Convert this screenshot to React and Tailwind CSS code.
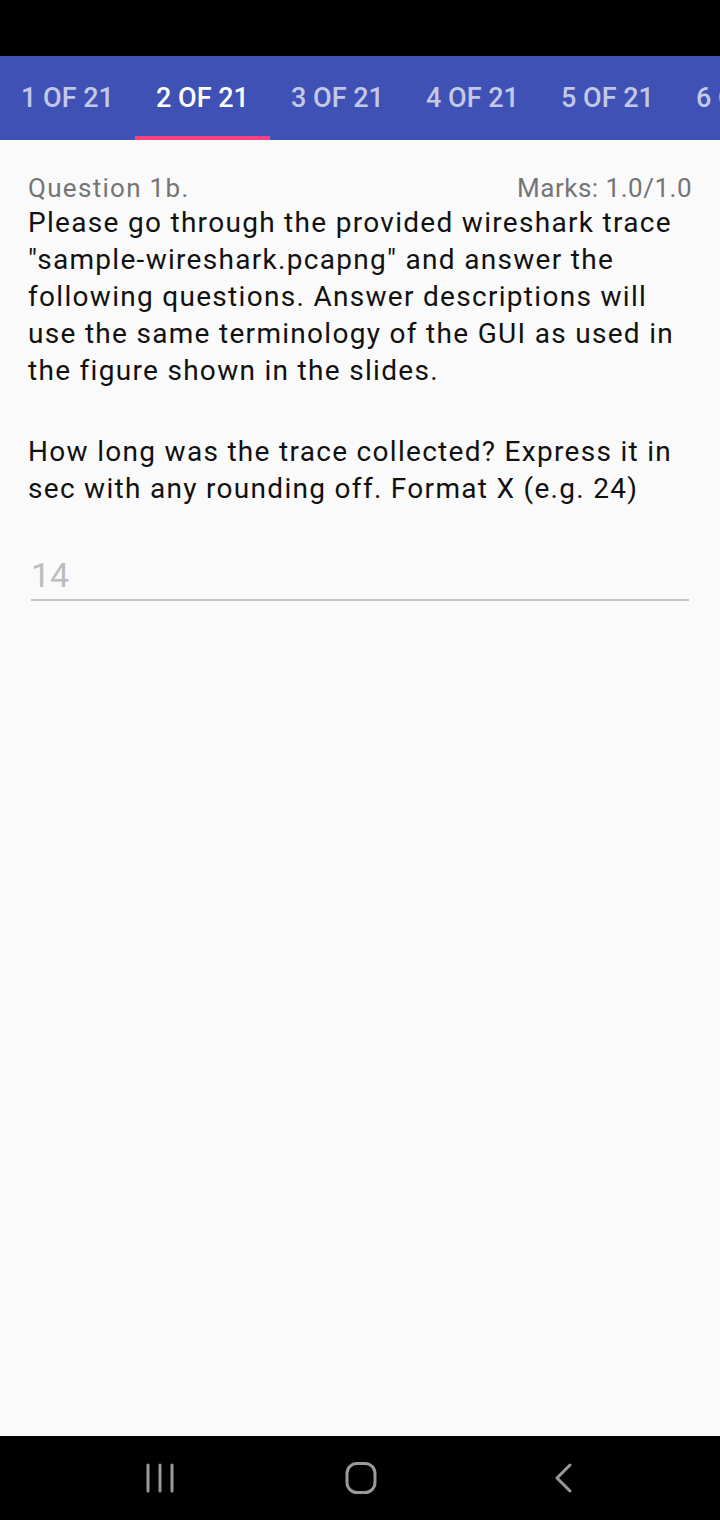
import React from "react";

const tabs = ["1 OF 21", "2 OF 21", "3 OF 21", "4 OF 21", "5 OF 21", "6 OF 21"];

export default function App() {
  return (
    <div
      className="h-[1520px] w-[720px] flex flex-col bg-[#fafafa] overflow-hidden"
      style={{ fontFamily: "Roboto, 'Noto Sans', sans-serif" }}
    >
      {/* Status bar */}
      <div className="h-[56px] bg-black shrink-0" />

      {/* Tabs */}
      <div className="h-[84px] bg-[#3f51b5] flex shrink-0 overflow-hidden">
        {tabs.map((t, i) => (
          <div key={t} className="w-[135px] shrink-0 flex flex-col">
            <div
              className={
                "flex-1 flex items-center justify-center pt-[4px] text-[27px] font-medium whitespace-nowrap " +
                (i === 1 ? "text-white" : "text-white/70")
              }
            >
              {t}
            </div>
            <div className={"h-[4px] " + (i === 1 ? "bg-[#ff4081]" : "")} />
          </div>
        ))}
      </div>

      {/* Content */}
      <div className="flex-1 pt-[32px] px-[28px]">
        <div className="flex justify-between text-[26px] leading-[32px] text-[#757575]">
          <span className="tracking-[1.3px]">Question 1b.</span>
          <span className="tracking-[0.5px]">Marks: 1.0/1.0</span>
        </div>
        <p className="text-[28px] leading-[37px] tracking-[1.3px] text-[#111]">
          Please go through the provided wireshark trace "sample-wireshark.pcapng" and answer the
          following questions. Answer descriptions will use the same terminology of the GUI as used in
          the figure shown in the slides.
        </p>
        <p className="mt-[44px] text-[28px] leading-[37px] tracking-[1.3px] text-[#111]">
          How long was the trace collected? Express it in sec with any rounding off. Format X (e.g. 24)
        </p>
        <div className="mt-[48px] mx-[3px] border-b-2 border-[#c4c4c4] pb-[4px] text-[34px] leading-[40px] text-[#bdbdbd]">
          14
        </div>
      </div>

      {/* Navigation bar */}
      <div className="h-[84px] bg-black shrink-0 flex items-center pl-[146px]">
        <svg width="28" height="30" viewBox="0 0 28 30">
          <g stroke="#9a9a9a" strokeWidth="3" strokeLinecap="round">
            <line x1="2" y1="2" x2="2" y2="28" />
            <line x1="14" y1="2" x2="14" y2="28" />
            <line x1="26" y1="2" x2="26" y2="28" />
          </g>
        </svg>
        <svg width="32" height="32" viewBox="0 0 32 32" className="ml-[171px]">
          <rect x="2" y="1.5" width="28" height="29" rx="10" fill="none" stroke="#9a9a9a" strokeWidth="3" />
        </svg>
        <svg width="20" height="30" viewBox="0 0 20 30" className="ml-[176px]">
          <polyline points="17,2 4,15 17,28" fill="none" stroke="#9a9a9a" strokeWidth="3" strokeLinecap="round" strokeLinejoin="round" />
        </svg>
      </div>
    </div>
  );
}
